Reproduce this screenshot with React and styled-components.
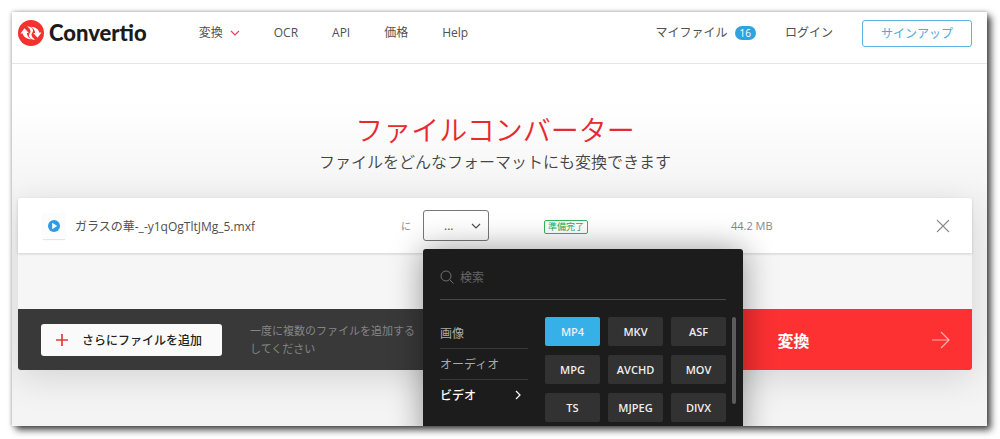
import React, { useState } from 'react'
import styled, { createGlobalStyle } from 'styled-components'

const categories = ['画像', 'オーディオ', 'ビデオ']
const formats = ['MP4', 'MKV', 'ASF', 'MPG', 'AVCHD', 'MOV', 'TS', 'MJPEG', 'DIVX']

const Chevron = ({ size = 10, dir = 'down' }) => (
  <svg width={size} height={size} viewBox="0 0 10 10" fill="none" stroke="currentColor" strokeWidth="1.2">
    <path d={dir === 'down' ? 'M1 3l4 4 4-4' : 'M3 1l4 4-4 4'} />
  </svg>
)

const LogoMark = () => (
  <svg width="26" height="26" viewBox="0 0 26 26" aria-hidden="true">
    <circle cx="13" cy="13" r="13" fill="#f3312f" />
    <g fill="#fff">
      <path d="M2.5 13.500L6.500 8.300l4.300 4.700H8.800c.2 2.600 1.600 4.600 4.700 6.300-4.700-.2-8.300-2.400-8.700-5.800z" />
      <path d="M23.500 12.500L19.500 17.700l-4.300-4.700h2c-.2-2.600-1.600-4.600-4.700-6.300 4.700.2 8.300 2.400 8.700 5.800z" />
      <path d="M9 6.200c3.400.2 6.200 2 6 4.600-.1 1.700-1.600 2.500-1.500 4 .1 1.900 1.600 3.500 3.500 5-3.400-.2-6.200-2-6-4.600.1-1.700 1.600-2.500 1.500-4-.1-1.900-1.600-3.500-3.500-5z" />
    </g>
  </svg>
)

const Header = () => (
  <TopBar>
    <Brand href="#home">
      <LogoMark />
      Convertio
    </Brand>
    <Nav>
      <NavLink href="#convert">
        変換
        <Accent><Chevron /></Accent>
      </NavLink>
      <NavLink href="#ocr">OCR</NavLink>
      <NavLink href="#api">API</NavLink>
      <NavLink href="#pricing">価格</NavLink>
      <NavLink href="#help">Help</NavLink>
    </Nav>
    <Account>
      <NavLink href="#files">
        マイファイル
        <Count>16</Count>
      </NavLink>
      <NavLink href="#login">ログイン</NavLink>
      <SignUp type="button">サインアップ</SignUp>
    </Account>
  </TopBar>
)

const FormatMenu = () => {
  const [category, setCategory] = useState('ビデオ')
  const [format, setFormat] = useState('MP4')

  return (
    <Menu>
      <Search>
        <svg width="14" height="14" viewBox="0 0 14 14" fill="none" stroke="#707070">
          <circle cx="6" cy="6" r="5" />
          <path d="M9.500 9.500L13.500 13.500" />
        </svg>
        <SearchInput type="text" placeholder="検索" aria-label="検索" />
      </Search>
      <MenuBody>
        <Categories>
          {categories.map((name) => (
            <Category key={name} type="button" $active={name === category} onClick={() => setCategory(name)}>
              {name}
              {name === category && <Chevron dir="right" />}
            </Category>
          ))}
        </Categories>
        <Formats>
          {formats.map((name) => (
            <Format key={name} type="button" $active={name === format} onClick={() => setFormat(name)}>
              {name}
            </Format>
          ))}
        </Formats>
        <Scrollbar />
      </MenuBody>
    </Menu>
  )
}

const App = () => {
  const [open, setOpen] = useState(true)

  return (
    <>
      <GlobalStyle />
      <Window>
        <Header />
        <Content>
          <Hero>
            <Title>ファイルコンバーター</Title>
            <Subtitle>ファイルをどんなフォーマットにも変換できます</Subtitle>
          </Hero>
          <Converter>
            <FileRow>
              <FileCell>
                <FileIcon>
                  <svg width="12" height="12" viewBox="0 0 12 12">
                    <circle cx="6" cy="6" r="6" fill="#2d9be8" />
                    <path d="M4.200 2.800v6.400L9.200 6z" fill="#fff" />
                  </svg>
                </FileIcon>
                <FileName>ガラスの華-_-y1qOgTltJMg_5.mxf</FileName>
                <To>に</To>
              </FileCell>
              <Picker>
                <PickerButton type="button" aria-label="フォーマット" aria-expanded={open} onClick={() => setOpen(!open)}>
                  <span>...</span>
                  <Chevron />
                </PickerButton>
                {open && <FormatMenu />}
              </Picker>
              <StatusCell>
                <Status>準備完了</Status>
              </StatusCell>
              <Size>44.2 MB</Size>
              <Remove type="button" aria-label="削除">
                <svg width="14" height="14" viewBox="0 0 14 14" stroke="#8a8a8a" strokeWidth="1.1">
                  <path d="M1 1l12 12M13 1L1 13" />
                </svg>
              </Remove>
            </FileRow>
            <Spacer />
            <Actions>
              <AddArea>
                <AddButton type="button">
                  <svg width="14" height="14" viewBox="0 0 14 14" stroke="#e5393c" strokeWidth="1.700">
                    <path d="M7 1v12M1 7h12" />
                  </svg>
                  さらにファイルを追加
                </AddButton>
                <Hint>一度に複数のファイルを追加するしてください</Hint>
              </AddArea>
              <ConvertButton type="button">
                変換
                <svg width="18" height="18" viewBox="0 0 18 18" fill="none" stroke="#ffb0b0" strokeWidth="1.200">
                  <path d="M0 9h17M9 1l8 8-8 8" />
                </svg>
              </ConvertButton>
            </Actions>
          </Converter>
        </Content>
      </Window>
    </>
  )
}

const GlobalStyle = createGlobalStyle`
  * {
    box-sizing: border-box;
  }

  body {
    margin: 0;
    background: #fff;
    color: #505050;
    font-family: 'Open Sans', 'Noto Sans CJK JP', sans-serif;
    font-size: 12px;
  }

  button,
  input {
    padding: 0;
    border: 0;
    background: none;
    color: inherit;
    font: inherit;
    white-space: nowrap;
  }

  button {
    cursor: pointer;
  }

  svg {
    display: block;
    flex: none;
  }
`

const Window = styled.div`
  margin: 12px 13px 13px 12px;
  overflow: hidden;
  background: #fff;
  box-shadow: 0 0 4px rgba(0, 0, 0, 0.3), 4px 4px 7px rgba(0, 0, 0, 0.7);
`

const TopBar = styled.header`
  display: flex;
  align-items: center;
  height: 52px;
  padding: 0 15px 9px 6px;
  border-bottom: 1px solid #e6e6e6;
`

const Brand = styled.a`
  display: flex;
  align-items: center;
  gap: 5px;
  color: #1b1b1b;
  font-family: Lato, sans-serif;
  font-size: 22px;
  font-weight: 900;
  line-height: 26px;
  text-decoration: none;
`

const Nav = styled.nav`
  display: flex;
  gap: 34px;
  margin-left: 52px;
`

const NavLink = styled.a`
  display: flex;
  align-items: center;
  gap: 7px;
  color: #505050;
  line-height: 18px;
  text-decoration: none;
  white-space: nowrap;
`

const Accent = styled.span`
  color: #e4405f;
`

const Account = styled.div`
  display: flex;
  align-items: center;
  gap: 29px;
  margin-left: auto;
`

const Count = styled.span`
  padding: 0 5px;
  border-radius: 7px;
  background: #2fa4dc;
  color: #fff;
  font-size: 10px;
  line-height: 14px;
`

const SignUp = styled.button`
  width: 110px;
  height: 27px;
  border: 1px solid #58b4e0;
  border-radius: 3px;
  color: #4aabdc;
`

const Content = styled.main`
  padding: 0 15px 56px 6px;
  background: linear-gradient(#fff 40px, #f4f4f4 134px, #f4f4f4);
`

const Hero = styled.section`
  padding: 46px 0 24px;
  text-align: center;
`

const Title = styled.h1`
  margin: 0;
  color: #e8292d;
  font-size: 28px;
  font-weight: 350;
  line-height: 40px;
`

const Subtitle = styled.p`
  margin: 0;
  color: #444;
  font-size: 16px;
  font-weight: 350;
  line-height: 24px;
`

const Converter = styled.section`
  border-radius: 3px;
  background: #f6f6f6;
  box-shadow: 0 8px 36px rgba(0, 0, 0, 0.13);
`

const FileRow = styled.div`
  display: grid;
  grid-template-columns: minmax(0, 368fr) 66px minmax(0, 218fr) minmax(0, 192fr) 16px;
  column-gap: 12px;
  align-items: center;
  height: 55px;
  padding: 0 21px 0 25px;
  border-radius: 3px 3px 0 0;
  background: #fff;
  box-shadow: 0 1px 3px rgba(0, 0, 0, 0.16);
`

const FileCell = styled.div`
  display: flex;
  align-items: center;
`

const FileIcon = styled.span`
  display: grid;
  place-items: center;
  width: 22px;
  height: 26px;
  margin-right: 10px;
  background: #fcfcfc;
  box-shadow: 0 1px 1px rgba(0, 0, 0, 0.1);
`

const FileName = styled.span`
  overflow: hidden;
  text-overflow: ellipsis;
  white-space: nowrap;
`

const To = styled.span`
  margin-left: auto;
  color: #888;
  font-size: 10px;
`

const Picker = styled.div`
  position: relative;
  z-index: 1;
`

const PickerButton = styled.button`
  display: flex;
  align-items: center;
  justify-content: space-between;
  width: 100%;
  height: 31px;
  padding: 0 7px 0 20px;
  border: 1px solid #777;
  border-radius: 3px;
`

const Menu = styled.div`
  position: absolute;
  top: 39px;
  left: 0;
  width: 320px;
  padding: 14px 6px 24px 17px;
  border-radius: 3px;
  background: #1c1c1c;
  box-shadow: 0 0 32px rgba(0, 0, 0, 0.4);
`

const Search = styled.div`
  display: flex;
  align-items: center;
  gap: 6px;
  height: 37px;
  margin-right: 11px;
  padding-bottom: 8px;
  border-bottom: 1px solid #484848;
`

const SearchInput = styled.input`
  flex: 1;
  min-width: 0;
  outline: 0;
  color: #ccc;

  &::placeholder {
    color: #666;
    opacity: 1;
  }
`

const MenuBody = styled.div`
  display: flex;
  margin-top: 17px;
`

const Categories = styled.div`
  width: 88px;
  margin-right: 17px;
`

const Category = styled.button`
  display: flex;
  align-items: center;
  justify-content: space-between;
  width: 100%;
  height: 31px;
  padding-right: 5px;
  color: ${({ $active }) => ($active ? '#fff' : '#aaa')};
  font-weight: ${({ $active }) => ($active ? 500 : 400)};

  & + & {
    border-top: 1px solid #383838;
  }
`

const Formats = styled.div`
  display: grid;
  grid-template-columns: repeat(3, 55px);
  grid-auto-rows: 29px;
  gap: 9px 8px;
`

const Format = styled.button`
  border-radius: 2px;
  background: ${({ $active }) => ($active ? '#35b1e8' : '#323232')};
  color: #eee;
  font-size: 11px;
  font-weight: 600;
`

const Scrollbar = styled.div`
  width: 4px;
  height: 87px;
  margin-left: 6px;
  border-radius: 2px;
  background: #5c5c5c;
`

const StatusCell = styled.div`
  padding-left: 43px;
`

const Status = styled.span`
  display: inline-block;
  padding: 0 3px;
  border: 1px solid #35b65c;
  border-radius: 2px;
  color: #27ae50;
  font-size: 9px;
  line-height: 12px;
  white-space: nowrap;
`

const Size = styled.span`
  color: #888;
  font-size: 11px;
`

const Remove = styled.button`
  display: grid;
  place-items: center;
  height: 16px;
`

const Spacer = styled.div`
  height: 56px;
`

const Actions = styled.div`
  display: flex;
  height: 61px;
  overflow: hidden;
  border-radius: 0 0 3px 3px;
`

const AddArea = styled.div`
  display: flex;
  flex: 1;
  align-items: center;
  gap: 28px;
  padding-left: 23px;
  background: #393939;
`

const AddButton = styled.button`
  display: flex;
  align-items: center;
  gap: 13px;
  height: 32px;
  padding: 0 20px 0 14px;
  border-radius: 3px;
  background: #fafafa;
  color: #222;
  font-weight: 500;
`

const Hint = styled.p`
  width: 170px;
  margin: 0;
  color: #858585;
  font-size: 11px;
  line-height: 18px;
`

const ConvertButton = styled.button`
  display: flex;
  align-items: center;
  justify-content: space-between;
  width: 25%;
  padding: 0 22px 0 44px;
  background: #fd3032;
  color: #fff;
  font-size: 16px;
  font-weight: 700;
`

export default App
